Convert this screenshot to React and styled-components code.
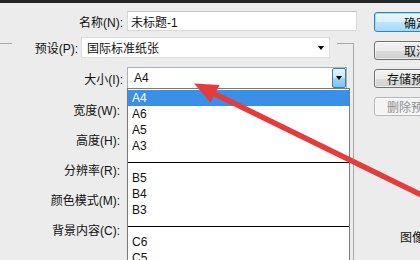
import React from 'react';
import styled, { createGlobalStyle } from 'styled-components';

// 新建文档对话框 (裁切的一角) + 红色指示箭头

const sizes = [
  { name: 'A4', selected: true },
  { name: 'A6' },
  { name: 'A5' },
  { name: 'A3' },
  { sep: true },
  { name: 'B5' },
  { name: 'B4' },
  { name: 'B3' },
  { sep: true },
  { name: 'C6' },
  { name: 'C5' },
];

// 这些行的输入框被下拉列表挡住了, 只留标签
const fields = [
  { label: '宽度(W):', gap: 9, unit: true },
  { label: '高度(H):', gap: 8, unit: true },
  { label: '分辨率(R):', gap: 8, unit: true },
  { label: '颜色模式(M):', gap: 8, unit: true },
  { label: '背景内容(C):', gap: 8, unit: false },
];

function App() {
  return (
    <Page>
      <GlobalStyle />
      <TopStrip />
      <Body>
        <FormArea>
          <Row $h={20}>
            <Label $inset={4}>名称(N):</Label>
            <Field $w={230}>未标题-1</Field>
          </Row>

          <GroupBox>
            <Legend>
              <LegendLabel>预设(P):</LegendLabel>
              <PresetSelect>
                国际标准纸张
                <Caret />
              </PresetSelect>
            </Legend>

            <Row $h={22} $gap={9}>
              <Label $inset={4}>大小(I):</Label>
              <SizeSelect>
                <SelectText>A4</SelectText>
                <DropButton>
                  <Caret />
                </DropButton>
                <DropList>
                  {sizes.map((s, i) =>
                    s.sep ? (
                      <ListSep key={i} />
                    ) : (
                      <ListItem key={i} $selected={s.selected}>
                        {s.name}
                      </ListItem>
                    )
                  )}
                </DropList>
              </SizeSelect>
            </Row>

            {fields.map((f, i) => (
              <Row key={i} $h={22} $gap={f.gap}>
                <Label $inset={7}>{f.label}</Label>
                <Field $w={90} />
                {f.unit && <UnitSelect />}
              </Row>
            ))}
          </GroupBox>
        </FormArea>

        <ButtonColumn>
          <Button $primary>确定</Button>
          <Button>取消</Button>
          <Button>存储预设...</Button>
          <Button $disabled>删除预设...</Button>
          <InfoText>图像大小:</InfoText>
        </ButtonColumn>
      </Body>

      <Overlay width="420" height="260" viewBox="0 0 420 260">
        <line x1="213" y1="93" x2="440" y2="204" stroke="#e63b3b" strokeWidth="5.5" />
        <polygon points="194,83.5 210.5,102.5 219.5,85" fill="#e63b3b" />
      </Overlay>
    </Page>
  );
}

export default App;

// styled-components

const GlobalStyle = createGlobalStyle`
  html, body {
    margin: 0;
    height: 100%;
    overflow: hidden;
  }
  body {
    background: #ececec;
    font-family: "Liberation Sans", "Noto Sans CJK SC", sans-serif;
    font-size: 12px;
    color: #111;
  }
`;

const Page = styled.div`
  position: relative;
  width: 420px;
  height: 260px;
  overflow: hidden;
  background: #ececec;
`;

const TopStrip = styled.div`
  height: 3px;
  background: #242424;
`;

const Body = styled.div`
  display: flex;
  align-items: flex-start;
`;

const FormArea = styled.div`
  width: 357px;
  flex-shrink: 0;
  padding-top: 8px;
`;

const Row = styled.div`
  display: flex;
  align-items: center;
  height: ${(p) => p.$h}px;
  margin-top: ${(p) => p.$gap || 0}px;
`;

const Label = styled.div`
  width: 127px;
  flex-shrink: 0;
  box-sizing: border-box;
  padding-right: ${(p) => p.$inset}px;
  text-align: right;
  white-space: nowrap;
`;

const Field = styled.div`
  width: ${(p) => p.$w}px;
  height: 100%;
  box-sizing: border-box;
  display: flex;
  align-items: center;
  padding: 0 3px;
  background: #fff;
  border: 1px solid #d9d9d9;
  border-top-color: #c6c6c6;
  white-space: nowrap;
`;

const UnitSelect = styled(Field)`
  width: 100px;
  margin-left: 4px;
`;

const GroupBox = styled.div`
  margin-top: 12px;
  width: 354px;
  height: 240px;
  box-sizing: border-box;
  border-top: 1px solid #a9a9a9;
  border-right: 1px solid #a9a9a9;
`;

const Legend = styled.div`
  display: flex;
  align-items: center;
  gap: 3px;
  width: fit-content;
  height: 21px;
  margin: -7px 0 0 12px;
  padding: 0 7px 0 20px;
  background: #ececec;
`;

const LegendLabel = styled.div`
  width: 46px;
  text-align: right;
  white-space: nowrap;
`;

const Caret = styled.span`
  width: 0;
  height: 0;
  border-left: 3.5px solid transparent;
  border-right: 3.5px solid transparent;
  border-top: 4px solid #000;
`;

const PresetSelect = styled.div`
  width: 249px;
  height: 21px;
  box-sizing: border-box;
  display: flex;
  align-items: center;
  justify-content: space-between;
  padding: 0 5px 0 5px;
  background: #fff;
  border: 1px solid #dcdcdc;
`;

const SizeSelect = styled.div`
  position: relative;
  width: 220px;
  height: 22px;
  box-sizing: border-box;
  display: flex;
  background: #fff;
  border: 1px solid #a7b2bf;
  z-index: 2;
`;

const SelectText = styled.div`
  flex: 1;
  display: flex;
  align-items: center;
  padding-left: 6px;
`;

const DropButton = styled.div`
  width: 14px;
  box-sizing: border-box;
  display: flex;
  align-items: center;
  justify-content: center;
  border: 1px solid #3c7fb1;
  border-radius: 2px;
  background: linear-gradient(#e8f5fc 0%, #c9e8f8 50%, #a4d6f2 51%, #7dc0e6 100%);
`;

const DropList = styled.div`
  position: absolute;
  top: 100%;
  left: -1px;
  width: 223px;
  box-sizing: border-box;
  padding-top: 1px;
  background: #fff;
  border: 1px solid #7a7a7a;
`;

const ListItem = styled.div`
  height: 16px;
  line-height: 16px;
  padding-left: 4px;
  background: ${(p) => (p.$selected ? '#3a8fe6' : 'transparent')};
  color: ${(p) => (p.$selected ? '#fff' : '#111')};
`;

const ListSep = styled.div`
  height: 16px;
  display: flex;
  align-items: center;
  &::after {
    content: "";
    flex: 1;
    height: 1px;
    background: #000;
  }
`;

const ButtonColumn = styled.div`
  width: 84px;
  flex-shrink: 0;
  margin-left: 17px;
  padding-top: 9px;
  display: flex;
  flex-direction: column;
  gap: 9px;
`;

const Button = styled.div`
  height: ${(p) => (p.$primary ? 20 : 19)}px;
  box-sizing: border-box;
  display: flex;
  align-items: center;
  justify-content: center;
  white-space: nowrap;
  border-radius: 3px;
  border: 1px solid ${(p) => (p.$primary ? '#3c7fb1' : p.$disabled ? '#b5b8ba' : '#707070')};
  background: ${(p) =>
    p.$primary
      ? 'linear-gradient(#eaf6fd 0%, #d9f0fc 50%, #bee6fd 51%, #a7d9f5 100%)'
      : p.$disabled
      ? '#f4f4f4'
      : 'linear-gradient(#f2f2f2 0%, #ebebeb 50%, #dddddd 51%, #cfcfcf 100%)'};
  box-shadow: ${(p) => (p.$primary ? 'inset 0 0 0 1px #8fe3ff' : 'inset 0 0 0 1px rgba(255,255,255,0.6)')};
  color: ${(p) => (p.$disabled ? '#8d8d8d' : '#111')};
`;

const InfoText = styled.div`
  margin-top: 106px;
  padding-left: 26px;
  line-height: 14px;
  white-space: nowrap;
`;

const Overlay = styled.svg`
  position: absolute;
  top: 0;
  left: 0;
  pointer-events: none;
  z-index: 5;
`;
